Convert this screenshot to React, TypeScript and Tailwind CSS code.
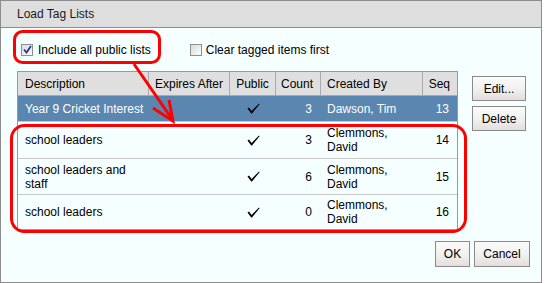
import React from 'react'

const font = { fontFamily: '"Liberation Sans", Arial, sans-serif' }

type Row = {
  desc: string
  count: number
  createdBy: string
  seq: number
  selected?: boolean
  height: string
}

const rows: Row[] = [
  { desc: 'Year 9 Cricket Interest', count: 3, createdBy: 'Dawson, Tim', seq: 13, selected: true, height: 'h-[25px]' },
  { desc: 'school leaders', count: 3, createdBy: 'Clemmons, David', seq: 14, height: 'h-[37px]' },
  { desc: 'school leaders and staff', count: 6, createdBy: 'Clemmons, David', seq: 15, height: 'h-[36px]' },
  { desc: 'school leaders', count: 0, createdBy: 'Clemmons, David', seq: 16, height: 'h-[35px]' },
]

const cols = 'grid grid-cols-[130px_81px_46px_45px_102px_35px]'

function Checkbox({ checked }: { checked?: boolean }) {
  return (
    <span className="w-[12px] h-[12px] border border-[#8e8f8f] bg-gradient-to-br from-[#dcdcdc] to-[#fbfbfb] flex items-center justify-center">
      {checked && (
        <svg width="9" height="9" viewBox="0 0 9 9">
          <path d="M1 4.5 L3.5 7.5 L8 1" fill="none" stroke="#2a2f9c" strokeWidth="1.8" />
        </svg>
      )}
    </span>
  )
}

function Tick() {
  return (
    <svg width="13" height="11" viewBox="0 0 13 11">
      <path d="M0.5 5.5 L2 4.6 L4.6 8 L12 0.6 L12.6 1.2 L5 10.5 L4.2 10.5 Z" fill="#000" />
    </svg>
  )
}

function Button({ label, className }: { label: string; className?: string }) {
  return (
    <button
      className={
        'border border-[#8a8a8a] bg-gradient-to-b from-[#fbfbfb] via-[#f1f1f1] to-[#e4dede] text-[12px] text-black flex items-center justify-center ' +
        (className ?? '')
      }
    >
      {label}
    </button>
  )
}

export default function App() {
  return (
    <div style={font} className="w-[546px] h-[283px] bg-white">
      <div className="relative w-[542px] h-[283px] border border-[#8c8c8c] bg-[#f5ffff] flex flex-col text-[12px] text-black">
        {/* Title */}
        <div className="h-[27px] shrink-0 bg-[#dedede] border-b border-[#8c8c8c] pl-[16px] flex items-center text-[#1a1a1a]">
          Load Tag Lists
        </div>

        <div className="flex-1 pl-[16px] pr-[11px] flex flex-col">
          {/* Options */}
          <div className="mt-[13px] h-[17px] flex items-center">
            <span className="ml-[4px]"><Checkbox checked /></span>
            <span className="ml-[5px]">Include all public lists</span>
            <span className="ml-[39px]"><Checkbox /></span>
            <span className="ml-[4px]">Clear tagged items first</span>
          </div>

          {/* Table + side buttons */}
          <div className="mt-[13px] flex items-start">
            <div className="border border-[#999] w-[441px]">
              <div className={cols + ' h-[24px] bg-[#dfdfdf] border-b border-[#aaa]'}>
                <div className="pl-[7px] flex items-center">Description</div>
                <div className="pl-[6px] flex items-center border-l border-[#aaa]">Expires After</div>
                <div className="flex items-center justify-center border-l border-[#aaa]">Public</div>
                <div className="pr-[7px] flex items-center justify-end border-l border-[#aaa]">Count</div>
                <div className="pl-[6px] flex items-center border-l border-[#aaa]">Created By</div>
                <div className="pr-[7px] flex items-center justify-end border-l border-[#aaa]">Seq</div>
              </div>
              {rows.map((r, i) => (
                <div
                  key={i}
                  className={
                    cols + ' leading-[14px] ' + r.height + ' ' +
                    (r.selected ? 'bg-[#5b86b0] text-white' : 'border-t border-[#c8c8c8]')
                  }
                >
                  <div className="pl-[7px] flex items-center">
                    <span className={r.selected ? 'whitespace-nowrap' : 'max-w-[110px]'}>{r.desc}</span>
                  </div>
                  <div />
                  <div className="flex items-center justify-center pl-[2px]"><Tick /></div>
                  <div className="pr-[8px] flex items-center justify-end">{r.count}</div>
                  <div className="pl-[7px] flex items-center">
                    <span className="max-w-[80px]">{r.createdBy}</span>
                  </div>
                  <div className="pr-[8px] flex items-center justify-end">{r.seq}</div>
                </div>
              ))}
            </div>

            <div className="ml-[14px] mt-[5px] flex flex-col gap-[5px]">
              <Button label="Edit..." className="w-[54px] h-[25px]" />
              <Button label="Delete" className="w-[54px] h-[25px]" />
            </div>
          </div>

          {/* Footer buttons */}
          <div className="mt-[11px] flex justify-end gap-[4px]">
            <Button label="OK" className="w-[35px] h-[26px]" />
            <Button label="Cancel" className="w-[56px] h-[26px]" />
          </div>
        </div>

        {/* Red annotation overlay */}
        <svg
          className="absolute left-[-1px] top-[-1px] pointer-events-none"
          width="546"
          height="283"
          viewBox="0 0 546 283"
        >
          <rect x="14.5" y="31.5" width="145" height="31" rx="8" fill="none" stroke="#ff0000" strokeWidth="3" />
          <line x1="134" y1="64" x2="172" y2="119" stroke="#ff0000" strokeWidth="3" />
          <polyline points="153,108 173,121 169,100" fill="none" stroke="#ff0000" strokeWidth="3" />
          <rect x="11.5" y="125.5" width="454" height="106" rx="13" fill="none" stroke="#ff0000" strokeWidth="3" />
        </svg>
      </div>
    </div>
  )
}
